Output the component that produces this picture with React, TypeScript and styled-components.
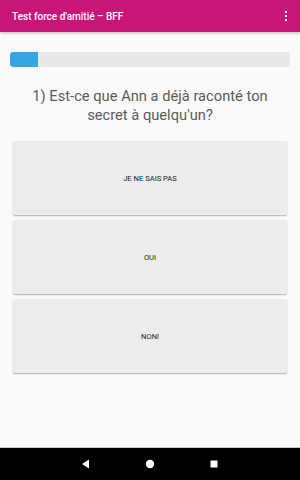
import React from 'react';
import styled, { createGlobalStyle } from 'styled-components';

const GlobalStyle = createGlobalStyle`
  html, body {
    margin: 0;
    padding: 0;
    background: #fafafa;
  }
  * {
    box-sizing: border-box;
  }
`;

const answers = ['JE NE SAIS PAS', 'OUI', 'NON!'];

export default function App() {
  const progress = 10;

  return (
    <Screen>
      <GlobalStyle />
      <AppBar>
        <Title>Test force d'amitié – BFF</Title>
        <MenuDots>
          <Dot />
          <Dot />
          <Dot />
        </MenuDots>
      </AppBar>

      <Content>
        <ProgressTrack>
          <ProgressFill style={{ width: `${progress}%` }} />
        </ProgressTrack>

        <Question>1) Est-ce que Ann a déjà raconté ton secret à quelqu'un?</Question>

        <Answers>
          {answers.map((a) => (
            <AnswerButton key={a}>{a}</AnswerButton>
          ))}
        </Answers>
      </Content>

      <NavBar>
        <svg width="10" height="10" viewBox="0 0 10 10">
          <polygon points="8,0.5 8,9.5 1,5" fill="#fff" />
        </svg>
        <svg width="10" height="10" viewBox="0 0 10 10">
          <circle cx="5" cy="5" r="4.2" fill="#fff" />
        </svg>
        <svg width="10" height="10" viewBox="0 0 10 10">
          <rect x="1.5" y="1.5" width="7" height="7" fill="#fff" />
        </svg>
      </NavBar>
    </Screen>
  );
}

const Screen = styled.div`
  width: 300px;
  height: 480px;
  display: flex;
  flex-direction: column;
  background: #fafafa;
  font-family: Roboto, 'Liberation Sans', sans-serif;
  overflow: hidden;
`;

const AppBar = styled.div`
  height: 32px;
  flex-shrink: 0;
  display: flex;
  align-items: center;
  justify-content: space-between;
  padding: 0 12px;
  background: #c8157a;
  box-shadow: 0 1px 3px rgba(0, 0, 0, 0.25);
  position: relative;
  z-index: 1;
`;

const Title = styled.div`
  color: #fff;
  font-size: 10px;
  font-weight: 500;
`;

const MenuDots = styled.div`
  display: flex;
  flex-direction: column;
  gap: 1.5px;
  margin-right: 1px;
`;

const Dot = styled.span`
  width: 2.5px;
  height: 2.5px;
  background: #fff;
`;

const Content = styled.div`
  flex: 1;
  display: flex;
  flex-direction: column;
  padding: 20px 10px 0;
  border-bottom: 1px solid #c8c8c8;
`;

const ProgressTrack = styled.div`
  height: 15px;
  background: #e8e8e8;
  border-radius: 3px;
  overflow: hidden;
`;

const ProgressFill = styled.div`
  height: 100%;
  background: #36a5e3;
  border-radius: 3px 0 0 3px;
`;

const Question = styled.div`
  margin: 20px 8px 0;
  text-align: center;
  color: #5a5a5a;
  font-size: 14.7px;
  line-height: 19px;
`;

const Answers = styled.div`
  display: flex;
  flex-direction: column;
  gap: 5px;
  margin: 16px 3px 0;
`;

const AnswerButton = styled.button`
  height: 74px;
  border: none;
  border-radius: 2px;
  background: #ececec;
  box-shadow: 0 1px 1.5px rgba(0, 0, 0, 0.3);
  color: #222;
  font-family: Roboto, 'Liberation Sans', sans-serif;
  font-size: 7.6px;
  font-weight: 400;
  padding: 0;
`;

const NavBar = styled.div`
  height: 32px;
  flex-shrink: 0;
  background: #000;
  display: flex;
  align-items: center;
  justify-content: center;
  gap: 54px;
`;
